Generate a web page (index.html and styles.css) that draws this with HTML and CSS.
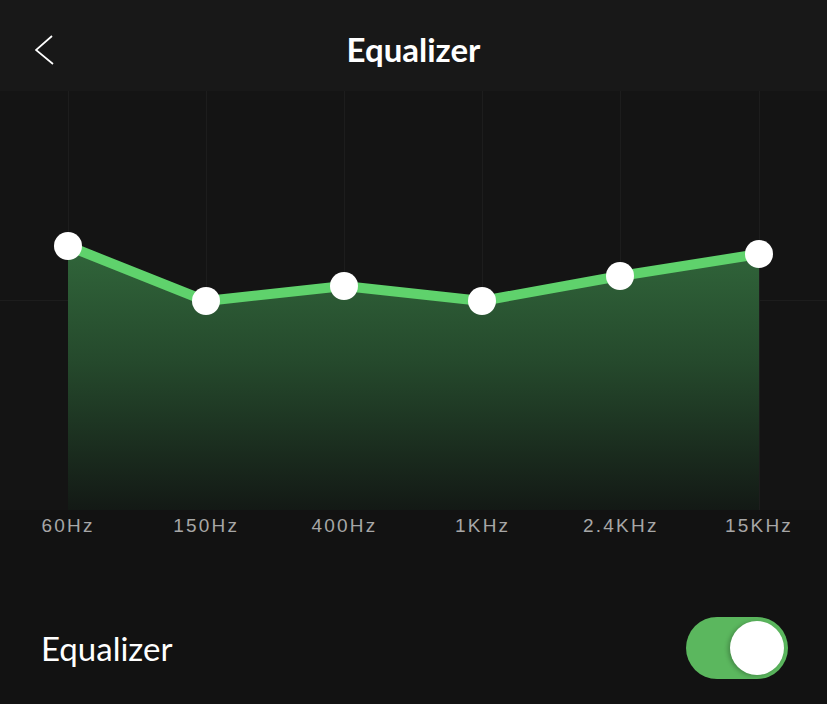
FILE: index.html
```html
<!doctype html>
<html lang="en">
<head>
  <meta charset="UTF-8">
  <meta name="viewport" content="width=device-width, initial-scale=1.0">
  <title>Equalizer</title>
  <link rel="stylesheet" href="styles.css">
</head>
<body>
  <div class="screen">
    <header class="topbar">
      <button class="back" aria-label="Back">
        <svg width="22" height="32" viewBox="0 0 22 32">
          <polyline points="17,3 1,17 18,31" fill="none" stroke="#fff" stroke-width="1.7" stroke-linejoin="miter"/>
        </svg>
      </button>
      <h1 class="title">Equalizer</h1>
      <span></span>
    </header>

    <section class="chart">
      <svg class="graph" width="827" height="419" viewBox="0 0 827 419">
        <defs>
          <linearGradient id="fill" x1="0" y1="150" x2="0" y2="419" gradientUnits="userSpaceOnUse">
            <stop offset="0" stop-color="#31673b"/>
            <stop offset="0.45" stop-color="#25492c"/>
            <stop offset="1" stop-color="#131915"/>
          </linearGradient>
        </defs>
        <!-- grid -->
        <g stroke="#1d1d1d" stroke-width="1">
          <line x1="0" y1="209.5" x2="827" y2="209.5"/>
          <line x1="68.5" y1="0" x2="68.5" y2="419"/>
          <line x1="206.5" y1="0" x2="206.5" y2="419"/>
          <line x1="344.5" y1="0" x2="344.5" y2="419"/>
          <line x1="482.5" y1="0" x2="482.5" y2="419"/>
          <line x1="620.5" y1="0" x2="620.5" y2="419"/>
          <line x1="759.5" y1="0" x2="759.5" y2="419"/>
        </g>
        <!-- band levels -->
        <polygon points="68,155 206,210 344,195 482,210 620,185 759,163 759,419 68,419" fill="url(#fill)"/>
        <polyline points="68,155 206,210 344,195 482,210 620,185 759,163" fill="none" stroke="#5fd26c" stroke-width="10" stroke-linejoin="round"/>
        <g fill="#fff">
          <circle cx="68" cy="155" r="14"/>
          <circle cx="206" cy="210" r="14"/>
          <circle cx="344" cy="195" r="14"/>
          <circle cx="482" cy="210" r="14"/>
          <circle cx="620" cy="185" r="14"/>
          <circle cx="759" cy="163" r="14"/>
        </g>
      </svg>
    </section>

    <div class="freqs">
      <span>60Hz</span>
      <span>150Hz</span>
      <span>400Hz</span>
      <span>1KHz</span>
      <span>2.4KHz</span>
      <span>15KHz</span>
    </div>

    <div class="setting">
      <span class="setting-label">Equalizer</span>
      <span class="switch on"><span class="knob"></span></span>
    </div>
  </div>
</body>
</html>
```

FILE: styles.css
```css
html, body {
  margin: 0;
  padding: 0;
  background: #121212;
}
.screen {
  width: 827px;
  height: 704px;
  overflow: hidden;
  font-family: Lato, "Noto Sans", sans-serif;
  color: #fff;
}
.topbar {
  height: 91px;
  box-sizing: border-box;
  padding-top: 7px;
  background: #181818;
  display: grid;
  grid-template-columns: 1fr auto 1fr;
  align-items: center;
}
.back {
  justify-self: start;
  margin-left: 35px;
  padding: 0;
  border: 0;
  background: none;
  display: flex;
}
.title {
  margin: 0;
  font-size: 33px;
  font-weight: 700;
  letter-spacing: 0;
}
.chart {
  height: 419px;
  background: #141414;
}
.graph {
  display: block;
}
.freqs {
  display: grid;
  grid-template-columns: repeat(6, 138.2px);
  margin-left: -1px;
  margin-top: 6px;
  line-height: 20px;
  font-family: "Liberation Sans", Arial, sans-serif;
  font-size: 19px;
  letter-spacing: 2.2px;
  color: #a7a7a7;
}
.freqs span {
  text-align: center;
}
.setting {
  margin-top: 81px;
  height: 62px;
  padding: 0 39px 0 41px;
  display: flex;
  align-items: center;
  justify-content: space-between;
}
.setting-label {
  font-size: 33px;
}
.switch {
  width: 102px;
  height: 62px;
  border-radius: 31px;
  background: #3e3e3e;
  box-sizing: border-box;
  padding: 4px;
  display: flex;
}
.switch.on {
  background: #5bb75e;
  justify-content: flex-end;
}
.knob {
  width: 54px;
  height: 54px;
  border-radius: 50%;
  background: #fff;
  box-shadow: -2px 1px 4px rgba(0, 0, 0, 0.25);
}
```
